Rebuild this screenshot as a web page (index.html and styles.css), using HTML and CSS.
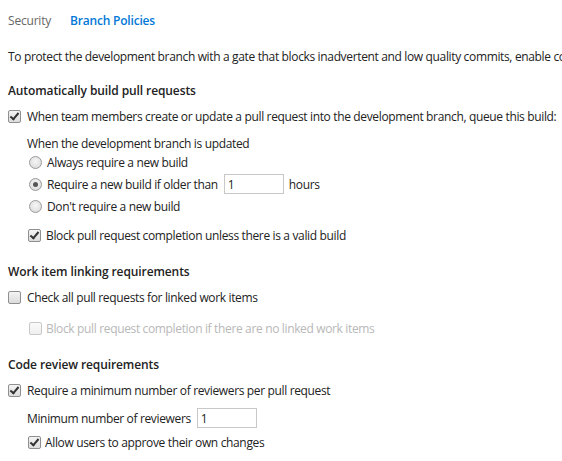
FILE: index.html
```html
<!DOCTYPE html>
<html>
<head>
<meta charset="utf-8">
<link rel="stylesheet" href="styles.css">
</head>
<body>
<div class="page">
  <nav class="tabs">
    <span class="tab">Security</span>
    <span class="tab active">Branch Policies</span>
  </nav>
  <p class="intro row">To protect the development branch with a gate that blocks inadvertent and low quality commits, enable configurable policies.</p>

  <h2 class="heading row h-first">Automatically build pull requests</h2>
  <label class="row opt o-top"><span class="cb checked"></span>When team members create or update a pull request into the development branch, queue this build:</label>
  <div class="indent">
    <div class="row sub">When the development branch is updated</div>
    <label class="row radio-row r-first"><span class="rb"></span>Always require a new build</label>
    <label class="row radio-row r-next"><span class="rb on"></span>Require a new build if older than <span class="field w60">1</span> hours</label>
    <label class="row radio-row r-next"><span class="rb"></span>Don't require a new build</label>
    <label class="row opt block"><span class="cb checked"></span>Block pull request completion unless there is a valid build</label>
  </div>

  <h2 class="heading row h-next">Work item linking requirements</h2>
  <label class="row opt o-top"><span class="cb"></span>Check all pull requests for linked work items</label>
  <div class="indent">
    <label class="row opt disabled d-top"><span class="cb dis"></span>Block pull request completion if there are no linked work items</label>
  </div>

  <h2 class="heading row h-next">Code review requirements</h2>
  <label class="row opt o-top"><span class="cb checked"></span>Require a minimum number of reviewers per pull request</label>
  <div class="indent">
    <div class="row min">Minimum number of reviewers <span class="field w60">1</span></div>
    <label class="row opt allow"><span class="cb checked"></span>Allow users to approve their own changes</label>
  </div>
</div>
</body>
</html>
```
FILE: styles.css
```css
html, body {
  margin: 0;
  padding: 0;
  background: #ffffff;
}
body {
  font-family: "Open Sans", "Noto Sans", sans-serif;
  font-size: 12px;
  color: #222222;
  letter-spacing: -0.35px;
  overflow: hidden;
}
.page {
  padding: 0 0 0 8px;
  width: 700px;
}
.tabs {
  display: flex;
  gap: 19px;
  height: 40px;
  align-items: center;
  font-size: 12px;
}
.tab { color: #666666; letter-spacing: -0.2px; }
.tab.active { color: #0078d7; font-weight: 600; letter-spacing: -0.2px; }
.row {
  height: 20px;
  display: flex;
  align-items: center;
  white-space: nowrap;
  margin: 0;
}
.intro { margin-top: 0; padding-top: 6px; }
.heading {
  font-size: 12px;
  font-weight: 600;
  color: #222;
  letter-spacing: -0.1px;
}
.h-first { margin-top: 14px; }
.h-next { margin-top: 16px; }
.o-top { margin-top: 6px; }
.indent { padding-left: 19px; }
.sub { margin-top: 7px; }
.r-first { margin-top: -1px; padding-left: 2px; }
.r-next { margin-top: 2px; padding-left: 2px; }
.radio-row .rb { margin-right: 5px; }
.block { margin-top: 9px; padding-left: 1px; }
.block .cb { margin-right: 5px; }
.d-top { margin-top: 11px; padding-left: 2px; }
.d-top .cb { margin-right: 4px; }
.min { margin-top: 8px; }
.allow { margin-top: 4px; padding-left: 1px; }
.allow .cb { margin-right: 4px; }

.cb {
  border: 1px solid #8e8f8f;
  border-radius: 2px;
  background: linear-gradient(#f4f4f4, #dcdcdc);
  margin-right: 6px;
  flex: none;
  position: relative;
  box-sizing: border-box;
  width: 13px;
  height: 13px;
}
.cb.checked::after {
  content: "";
  position: absolute;
  left: 3px;
  top: 0px;
  width: 3px;
  height: 7px;
  border: solid #333;
  border-width: 0 2px 2px 0;
  transform: rotate(40deg);
}
.cb.dis {
  border-color: #c8c8c8;
  background: linear-gradient(#fafafa, #efefef);
}
.disabled { color: #b8b8b8; }
.rb {
  width: 13px;
  height: 13px;
  border-radius: 50%;
  border: 1px solid #9a9a9a;
  background: radial-gradient(circle at 50% 40%, #f6f6f6, #d6d6d6);
  box-sizing: border-box;
  margin-right: 6px;
  flex: none;
  position: relative;
}
.rb.on::after {
  content: "";
  position: absolute;
  left: 3px;
  top: 3px;
  width: 5px;
  height: 5px;
  border-radius: 50%;
  background: #555;
}
.field {
  display: inline-flex;
  align-items: center;
  height: 20px;
  box-sizing: border-box;
  border: 1px solid #c8c8c8;
  padding-left: 3px;
  margin: 0 5px 0 6px;
  background: #fff;
}
.w60 { width: 60px; }
```
